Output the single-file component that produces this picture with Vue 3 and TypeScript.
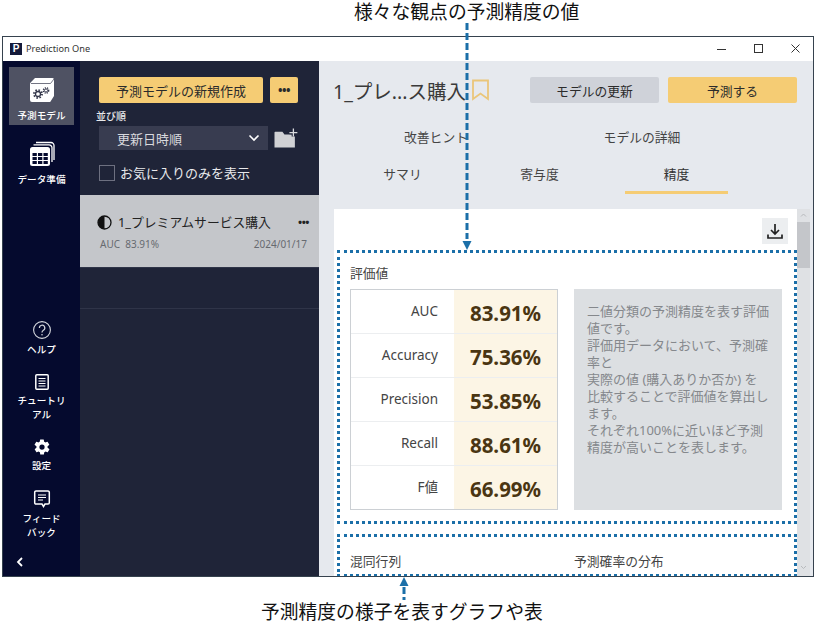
<script setup lang="ts">
interface Metric { label: string; value: string }
const metrics: Metric[] = [
  { label: 'AUC', value: '83.91%' },
  { label: 'Accuracy', value: '75.36%' },
  { label: 'Precision', value: '53.85%' },
  { label: 'Recall', value: '88.61%' },
  { label: 'F値', value: '66.99%' },
]
const description: string[] = [
  '二値分類の予測精度を表す評価値です。',
  '評価用データにおいて、予測確率と',
  '実際の値 (購入ありか否か) を比較することで評価値を算出します。',
  'それぞれ100%に近いほど予測精度が高いことを表します。',
]
const gridCells: { x: number; y: number }[] = []
for (const y of [12, 16, 20]) {
  for (const x of [3.5, 9, 14.5]) gridCells.push({ x, y })
}
</script>

<template>
  <div class="page">
    <p class="caption caption-top">様々な観点の予測精度の値</p>
    <div class="window">
      <header class="titlebar">
        <span class="logo">P</span>
        <span class="app-name">Prediction One</span>
        <div class="win-controls">
          <svg width="12" height="12" viewBox="0 0 12 12"><path d="M1 6.5h9" stroke="#333" fill="none" /></svg>
          <svg width="12" height="12" viewBox="0 0 12 12"><rect x="1.5" y="1.5" width="8" height="8" stroke="#333" fill="none" /></svg>
          <svg width="12" height="12" viewBox="0 0 12 12"><path d="M1.5 1.5l8 8M9.5 1.5l-8 8" stroke="#333" fill="none" /></svg>
        </div>
      </header>
      <div class="body">
        <nav class="sidebar">
          <a class="nav-item active">
            <svg width="26" height="26" viewBox="0 0 26 26">
              <path d="M6 1h17.500a1.500 1.500 0 0 1 1.500 1.500V19l-3.500 5.500a1 1 0 0 1-1 .5H3a2 2 0 0 1-2-2V7a2 2 0 0 1 .6-1.400z" fill="#fff" />
              <path d="M2 6.500h19.500L25 2" stroke="#4f5263" stroke-width=".8" fill="none" />
              <circle cx="9" cy="17" r="2.500" fill="none" stroke="#33364a" stroke-width="1.300" />
              <circle cx="9" cy="17" r="4" fill="none" stroke="#33364a" stroke-width="1.800" stroke-dasharray="1.500 1.640" />
              <circle cx="17" cy="13.500" r="1.600" fill="none" stroke="#33364a" stroke-width="1" />
              <circle cx="17" cy="13.500" r="2.700" fill="none" stroke="#33364a" stroke-width="1.300" stroke-dasharray="1.200 1.030" />
            </svg>
            <span>予測モデル</span>
          </a>
          <a class="nav-item data">
            <svg width="26" height="26" viewBox="0 0 26 26">
              <path d="M7 1.500h15a3 3 0 0 1 3 3V19" fill="none" stroke="#fff" stroke-width="1.300" />
              <path d="M4.500 3.800H20a3 3 0 0 1 3 3V21" fill="none" stroke="#fff" stroke-width="1.300" />
              <rect x="1" y="6" width="20" height="19" rx="2.500" fill="#fff" />
              <rect v-for="(c, i) in gridCells" :key="i" :x="c.x" :y="c.y" width="4.300" height="3" fill="#050a2e" />
            </svg>
            <span>データ準備</span>
          </a>
          <a class="nav-item help">
            <svg width="20" height="20" viewBox="0 0 20 20">
              <circle cx="10" cy="10" r="8.400" fill="none" stroke="#d6d8de" stroke-width="1.100" />
              <path d="M7.400 8a2.700 2.700 0 1 1 4 2.300c-1 .6-1.400 1-1.400 2.200" fill="none" stroke="#d6d8de" stroke-width="1.200" />
              <circle cx="10" cy="14.800" r=".8" fill="#d6d8de" />
            </svg>
            <span>ヘルプ</span>
          </a>
          <a class="nav-item">
            <svg width="18" height="18" viewBox="0 0 18 18">
              <rect x="2.800" y="1.800" width="12.400" height="14.400" rx="1" fill="none" stroke="#fff" stroke-width="1.500" />
              <path d="M5.500 5.500h7M5.500 8h7M5.500 10.500h7M5.500 13h7" stroke="#fff" />
            </svg>
            <span>チュートリ<br />アル</span>
          </a>
          <a class="nav-item">
            <svg width="18" height="18" viewBox="0 0 24 24">
              <path fill="#fff" d="M19.400 13a7.500 7.500 0 0 0 0-2l2.100-1.600a.5.500 0 0 0 .1-.7l-2-3.400a.5.500 0 0 0-.6-.2l-2.500 1a7.300 7.300 0 0 0-1.700-1l-.4-2.700a.5.500 0 0 0-.5-.4h-4a.5.500 0 0 0-.5.400l-.4 2.700a7.300 7.300 0 0 0-1.700 1l-2.500-1a.5.500 0 0 0-.6.200l-2 3.400a.5.500 0 0 0 .1.700L4.600 11a7.500 7.500 0 0 0 0 2l-2.100 1.600a.5.500 0 0 0-.1.700l2 3.400c.1.200.4.300.6.200l2.500-1c.5.400 1.100.7 1.700 1l.4 2.700c0 .2.300.4.500.4h4c.2 0 .5-.2.5-.4l.4-2.700c.6-.3 1.200-.6 1.700-1l2.500 1c.2.100.5 0 .6-.2l2-3.400a.5.500 0 0 0-.1-.7zM12 15.500a3.500 3.500 0 1 1 0-7 3.500 3.500 0 0 1 0 7z" />
            </svg>
            <span>設定</span>
          </a>
          <a class="nav-item">
            <svg width="18" height="20" viewBox="0 0 18 20">
              <path d="M3 2h12a1.300 1.300 0 0 1 1.300 1.300v10.400A1.300 1.300 0 0 1 15 15h-3l-1.500 2.500L9 15H3a1.300 1.300 0 0 1-1.300-1.300V3.300A1.300 1.300 0 0 1 3 2z" fill="none" stroke="#fff" stroke-width="1.500" />
              <path d="M5 6h8M5 8.500h8M5 11h5" stroke="#fff" />
            </svg>
            <span>フィード<br />バック</span>
          </a>
          <svg class="collapse" width="10" height="12" viewBox="0 0 10 12"><path d="M7 2 3 6l4 4" fill="none" stroke="#fff" stroke-width="1.800" /></svg>
        </nav>

        <aside class="panel">
          <div class="panel-tools">
            <div class="create-row">
              <button class="btn btn-create">予測モデルの新規作成</button>
              <button class="btn btn-more">•••</button>
            </div>
            <label class="sort-label">並び順</label>
            <div class="sort-row">
              <div class="select">
                <span>更新日時順</span>
                <svg width="12" height="8" viewBox="0 0 12 8"><path d="M1.500 1.500 6 6l4.500-4.500" fill="none" stroke="#fff" stroke-width="1.600" /></svg>
              </div>
              <svg width="24" height="20" viewBox="0 0 24 20">
                <path d="M0.500 4.500a.7.7 0 0 1 .7-.7h7.300l2 2.700h10.500v13H.5z" fill="#d0d1d4" />
                <path d="M19.500 .5v8M15.500 4.500h8" stroke="#1f2438" stroke-width="3.500" />
                <path d="M19.500 .5v8M15.500 4.500h8" stroke="#d8d9dc" stroke-width="1.300" />
              </svg>
            </div>
            <div class="fav-row">
              <span class="checkbox"></span>
              <span>お気に入りのみを表示</span>
            </div>
          </div>
          <div class="model-card">
            <div class="model-title">
              <svg width="15" height="15" viewBox="0 0 15 15">
                <circle cx="7.500" cy="7.500" r="6.500" fill="#c4c6ca" stroke="#111" stroke-width="1.300" />
                <path d="M7.500 1a6.500 6.500 0 0 0 0 13z" fill="#111" />
              </svg>
              <span class="model-name">1_プレミアムサービス購入</span>
              <span class="model-more">•••</span>
            </div>
            <div class="model-meta">
              <span>AUC&nbsp; 83.91%</span>
              <span>2024/01/17</span>
            </div>
          </div>
          <div class="empty-row"></div>
        </aside>

        <main class="main">
          <div class="head">
            <h1>1_プレ...ス購入</h1>
            <svg class="bookmark" width="17" height="22" viewBox="0 0 17 22"><path d="M1 1.500h15v18.500L8.500 14.500 1 20z" fill="none" stroke="#eac679" stroke-width="1.800" /></svg>
            <div class="head-actions">
              <button class="btn btn-gray">モデルの更新</button>
              <button class="btn btn-yellow">予測する</button>
            </div>
          </div>
          <div class="tabs tabs-upper">
            <span>改善ヒント</span>
            <span>モデルの詳細</span>
          </div>
          <div class="tabs tabs-lower">
            <span>サマリ</span>
            <span>寄与度</span>
            <span class="tab-active">精度</span>
          </div>
          <div class="content-wrap">
            <section class="content">
              <div class="download">
                <svg width="18" height="18" viewBox="0 0 18 18"><path d="M9 2v9.500M5 8l4 4 4-4M2 12.500V16h14v-3.500" fill="none" stroke="#222" stroke-width="1.700" /></svg>
              </div>
              <h2 class="sec-title">評価値</h2>
              <div class="metrics-row">
                <div class="metric-table">
                  <div v-for="m in metrics" :key="m.label" class="metric-row">
                    <span class="metric-label">{{ m.label }}</span>
                    <span class="metric-value">{{ m.value }}</span>
                  </div>
                </div>
                <div class="desc">
                  <p v-for="(d, i) in description" :key="i">{{ d }}</p>
                </div>
              </div>
              <div class="lower-titles">
                <h2>混同行列</h2>
                <h2>予測確率の分布</h2>
              </div>
              <div class="box box-metrics"></div>
              <div class="box box-lower"></div>
            </section>
            <div class="scrollbar">
              <svg width="13" height="13" viewBox="0 0 13 13"><path d="M4 7.500l2.500-2.500L9 7.500" fill="none" stroke="#b8babd" /></svg>
              <div class="thumb"></div>
              <svg class="down" width="13" height="13" viewBox="0 0 13 13"><path d="M4 5l2.500 2.500L9 5" fill="none" stroke="#b8babd" /></svg>
            </div>
          </div>
        </main>
      </div>
    </div>
    <p class="caption caption-bottom">予測精度の様子を表すグラフや表</p>

    <svg class="arrow arrow-top" width="12" height="228" viewBox="0 0 12 228">
      <path d="M6 0v216" stroke="#1b6fa8" stroke-width="3" stroke-dasharray="7 3" fill="none" />
      <path d="M1.500 218h9L6 227z" fill="#1b6fa8" />
    </svg>
    <svg class="arrow arrow-bottom" width="12" height="24" viewBox="0 0 12 24">
      <path d="M6 10v13" stroke="#1b6fa8" stroke-width="3" stroke-dasharray="7 3" fill="none" />
      <path d="M1.500 9h9L6 0z" fill="#1b6fa8" />
    </svg>
  </div>
</template>

<style>
html, body { margin: 0; background: #fff; }
</style>

<style scoped>
.page {
  position: relative;
  width: 816px;
  height: 624px;
  overflow: hidden;
  background: #fff;
  font-family: "Noto Sans", "Noto Sans CJK JP", sans-serif;
  color: #333;
}
.caption {
  margin: 0;
  height: 36px;
  font-size: 18.800px;
  line-height: 24px;
  color: #111;
  white-space: nowrap;
}
.caption-top { padding-left: 354px; box-sizing: border-box; }
.caption-bottom { padding: 23px 0 0 261px; height: 47px; box-sizing: border-box; }
.window {
  box-sizing: border-box;
  width: 812px;
  height: 541px;
  margin-left: 2px;
  border: 1px solid #36424e;
  display: flex;
  flex-direction: column;
}
.titlebar {
  height: 24px;
  flex: none;
  display: flex;
  align-items: center;
  padding-left: 7px;
  background: #fff;
}
.logo {
  width: 12px;
  height: 12px;
  margin-top: -1px;
  background: #141a3a;
  color: #fff;
  font: 700 10px/12px "Liberation Sans", sans-serif;
  text-align: center;
}
.app-name { margin-left: 4px; margin-top: -2px; font-size: 9.200px; color: #333; }
.win-controls {
  margin-left: auto;
  display: flex;
  gap: 25px;
  padding-right: 11px;
}
.body { flex: 1; display: flex; min-height: 0; }
.sidebar {
  width: 77px;
  flex: none;
  box-sizing: border-box;
  padding-top: 6px;
  background: #050a2e;
  display: flex;
  flex-direction: column;
  align-items: center;
  color: #fff;
}
.nav-item {
  width: 65px;
  display: flex;
  flex-direction: column;
  align-items: center;
  font-size: 9.600px;
  line-height: 14px;
  font-weight: 500;
  text-align: center;
  margin-bottom: 16px;
}
.nav-item span { width: 60px; margin-top: 3px; }
.nav-item.active {
  box-sizing: border-box;
  height: 58px;
  padding-top: 10px;
  background: #4f5263;
  margin-bottom: 16px;
}
.nav-item.active span { margin-top: 6px; }
.nav-item.data span { margin-top: 6px; }
.nav-item.help { margin-top: auto; }
.collapse { align-self: flex-start; margin: 0 0 8px 12px; }
.panel {
  width: 239px;
  flex: none;
  background: #1f2438;
  display: flex;
  flex-direction: column;
}
.panel-tools {
  box-sizing: border-box;
  height: 134px;
  padding: 16px 21px 0 19px;
  color: #e8e9ec;
}
.create-row { display: flex; gap: 7px; }
.btn {
  border: 0;
  padding: 0;
  font-family: inherit;
  color: #2b2b2b;
  border-radius: 2px;
}
.btn-create { width: 165px; height: 26px; background: #f5cc74; font-size: 13px; }
.btn-more { width: 28px; height: 26px; background: #f5cc74; font-size: 12px; font-weight: 700; letter-spacing: -.5px; }
.sort-label { display: block; margin-top: 6px; font-size: 10px; line-height: 14px; font-weight: 500; margin-left: -3px; }
.sort-row { display: flex; align-items: center; gap: 6px; margin-top: 3px; }
.select {
  box-sizing: border-box;
  width: 170px;
  height: 24px;
  background: #383c50;
  padding: 0 8px 0 18px;
  display: flex;
  align-items: center;
  justify-content: space-between;
  font-size: 13px;
  color: #d8d9de;
}
.fav-row { display: flex; align-items: center; gap: 5px; margin-top: 13px; font-size: 13px; }
.checkbox {
  box-sizing: border-box;
  width: 16px;
  height: 16px;
  border: 1.500px solid #6d7080;
}
.model-card {
  box-sizing: border-box;
  height: 73px;
  background: #c4c6ca;
  border-bottom: 1px solid #2f3448;
  padding: 18px 10px 0 17px;
}
.model-title { display: flex; align-items: center; gap: 6px; font-size: 12.800px; color: #222; line-height: 18px; }
.model-more { margin-left: auto; font-size: 11px; font-weight: 700; letter-spacing: -.5px; }
.model-meta {
  display: flex;
  justify-content: space-between;
  margin: 6px 2px 0 3px;
  font-size: 10px;
  color: #676a70;
}
.empty-row { height: 40px; border-bottom: 1px solid #2f3448; }
.main {
  flex: 1;
  min-width: 0;
  background: #e6e9ee;
  display: flex;
  flex-direction: column;
}
.head { display: flex; align-items: center; padding: 16px 16px 0 14px; height: 26px; }
.head h1 { margin: 0; font-size: 19.500px; font-weight: 400; color: #3a3a3a; white-space: nowrap; }
.bookmark { margin-left: 6px; }
.head-actions { margin-left: auto; display: flex; gap: 9px; }
.btn-gray { width: 129px; height: 26px; background: #cfd2d9; font-size: 12.800px; }
.btn-yellow { width: 129px; height: 26px; background: #f5cc74; font-size: 12.800px; }
.tabs { position: relative; display: flex; font-size: 12.800px; color: #444; }
.tabs span { text-align: center; }
.tabs-upper { margin-top: 24px; height: 20px; padding-left: 14px; }
.tabs-upper span { width: 206px; }
.tabs-lower { margin-top: 17px; height: 30px; padding-left: 15px; }
.tabs-lower span { width: 137px; }
.tabs-lower .tab-active {
  width: 103px;
  margin-left: 17px;
  box-sizing: border-box;
  height: 30px;
  border-bottom: 3px solid #f5cc74;
  color: #333;
}
.content-wrap { flex: 1; min-height: 0; display: flex; margin: 15px 3px 0 15px; }
.content {
  position: relative;
  flex: 1;
  min-width: 0;
  background: #fff;
  overflow: hidden;
  padding: 9px 15px 0 16px;
}
.download {
  width: 26px;
  height: 26px;
  margin-left: auto;
  margin-right: -6px;
  background: #eceef0;
  display: flex;
  align-items: center;
  justify-content: center;
}
.sec-title, .lower-titles h2 { margin: 0; font-size: 12.800px; font-weight: 400; color: #444; }
.sec-title { margin-top: 20px; line-height: 18px; }
.metrics-row { display: flex; gap: 16px; margin-top: 7px; }
.metric-table { width: 208px; box-sizing: border-box; border: 1px solid #ccd0d4; flex: none; }
.metric-row { display: flex; height: 44px; border-top: 1px solid #eceef0; box-sizing: border-box; }
.metric-row:first-child { border-top: 0; height: 43px; }
.metric-label {
  width: 103px;
  box-sizing: border-box;
  padding-right: 16px;
  text-align: right;
  font-size: 13.500px;
  line-height: 43px;
  color: #444;
}
.metric-value {
  flex: 1;
  background: #fcf5e5;
  text-align: center;
  font-size: 20.500px;
  line-height: 47px;
  font-weight: 700;
  color: #4a3512;
}
.desc {
  box-sizing: border-box;
  width: 208px;
  flex: none;
  height: 221px;
  padding: 14px 13px 0;
  background: #dcdfe2;
  font-size: 13px;
  line-height: 17px;
  color: #85888c;
}
.desc p { margin: 0; }
.lower-titles { display: flex; margin-top: 42px; }
.lower-titles h2 { width: 224px; flex: none; line-height: 18px; }
.box {
  position: absolute;
  left: 3px;
  right: 0;
  border: 3px dotted #1b6fa8;
  box-sizing: border-box;
}
.box-metrics { top: 41px; height: 274px; }
.box-lower { top: 325px; height: 43px; }
.scrollbar {
  position: relative;
  width: 13px;
  flex: none;
  background: #dfe1e4;
}
.scrollbar svg { display: block; }
.scrollbar .down { position: absolute; bottom: 2px; left: 0; }
.thumb { height: 46px; background: #c4c6ca; }
.arrow { position: absolute; }
.arrow-top { left: 461px; top: 23px; }
.arrow-bottom { left: 398px; top: 577px; }
</style>
